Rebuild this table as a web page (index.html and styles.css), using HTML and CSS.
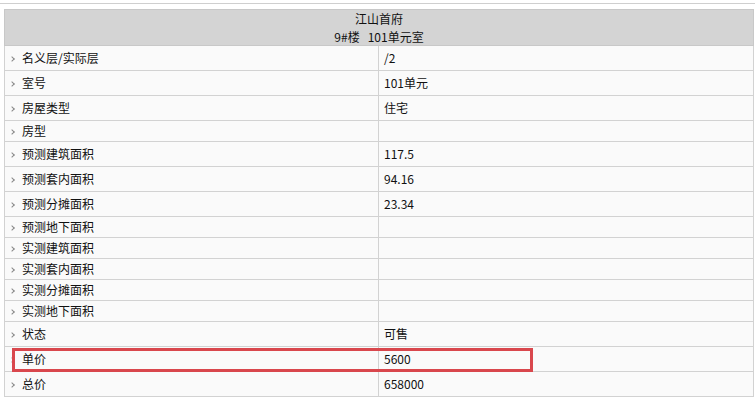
FILE: index.html
```html
<!DOCTYPE html>
<html lang="zh-CN">
<head>
<meta charset="utf-8">
<title>江山首府</title>
<link rel="stylesheet" href="styles.css">
</head>
<body>
<div class="topline"></div>
<div class="wrap">
  <table class="info">
    <colgroup><col class="c1"><col class="c2"></colgroup>
    <thead>
      <tr><th colspan="2"><div class="l1">江山首府</div><div class="l2">9#楼&nbsp;&nbsp;&nbsp;101单元室</div></th></tr>
    </thead>
    <tbody>
      <tr class="v"><td class="k"><i class="ar"></i>名义层/实际层</td><td>/2</td></tr>
      <tr class="v"><td class="k"><i class="ar"></i>室号</td><td>101单元</td></tr>
      <tr class="v"><td class="k"><i class="ar"></i>房屋类型</td><td>住宅</td></tr>
      <tr class="e"><td class="k"><i class="ar"></i>房型</td><td></td></tr>
      <tr class="v"><td class="k"><i class="ar"></i>预测建筑面积</td><td>117.5</td></tr>
      <tr class="v"><td class="k"><i class="ar"></i>预测套内面积</td><td>94.16</td></tr>
      <tr class="v"><td class="k"><i class="ar"></i>预测分摊面积</td><td>23.34</td></tr>
      <tr class="e"><td class="k"><i class="ar"></i>预测地下面积</td><td></td></tr>
      <tr class="e"><td class="k"><i class="ar"></i>实测建筑面积</td><td></td></tr>
      <tr class="e"><td class="k"><i class="ar"></i>实测套内面积</td><td></td></tr>
      <tr class="e"><td class="k"><i class="ar"></i>实测分摊面积</td><td></td></tr>
      <tr class="e"><td class="k"><i class="ar"></i>实测地下面积</td><td></td></tr>
      <tr class="v"><td class="k"><i class="ar"></i>状态</td><td>可售</td></tr>
      <tr class="v"><td class="k"><i class="ar"></i>单价</td><td>5600</td></tr>
      <tr class="v"><td class="k"><i class="ar"></i>总价</td><td>658000</td></tr>
    </tbody>
  </table>
  <div class="mark"></div>
</div>
</body>
</html>
```
FILE: styles.css
```css
html, body {
  margin: 0;
  padding: 0;
  background: #ffffff;
}
body {
  font-family: "Noto Sans CJK SC", "Liberation Sans", sans-serif;
  font-size: 12px;
  color: #111;
}
.topline {
  height: 3px;
  border-bottom: 1px solid #cfcfcf;
  margin-bottom: 5px;
}
.wrap {
  position: relative;
  margin-left: 4px;
  width: 750px;
}
.info {
  width: 750px;
  border-collapse: collapse;
  table-layout: fixed;
  border: 1px solid #c8c8c8;
}
.info col.c1 { width: 374px; }
.info th {
  height: 34px;
  padding: 0;
  background: #d4d4d4;
  font-weight: normal;
  text-align: center;
  color: #111;
  border: 1px solid #c8c8c8;
}
.info th .l1 { line-height: 17px; }
.info th .l2 { line-height: 17px; margin-top: 1px; }
.info td {
  padding: 0 0 0 5px;
  border: 1px solid #d2d2d2;
  background: #fafafa;
  line-height: 16px;
  white-space: nowrap;
}
.info tr.v td { height: 24px; }
.info tr.e td { height: 20px; }
.info td.k { padding-left: 5px; }
.ar {
  display: inline-block;
  width: 3px;
  height: 3px;
  border-right: 1px solid #888;
  border-top: 1px solid #888;
  transform: rotate(45deg);
  margin: 0 8px 1px 0;
  vertical-align: middle;
}
.mark {
  position: absolute;
  left: 8px;
  top: 339px;
  width: 515px;
  height: 18px;
  border: 3px solid #d9474d;
}
```
